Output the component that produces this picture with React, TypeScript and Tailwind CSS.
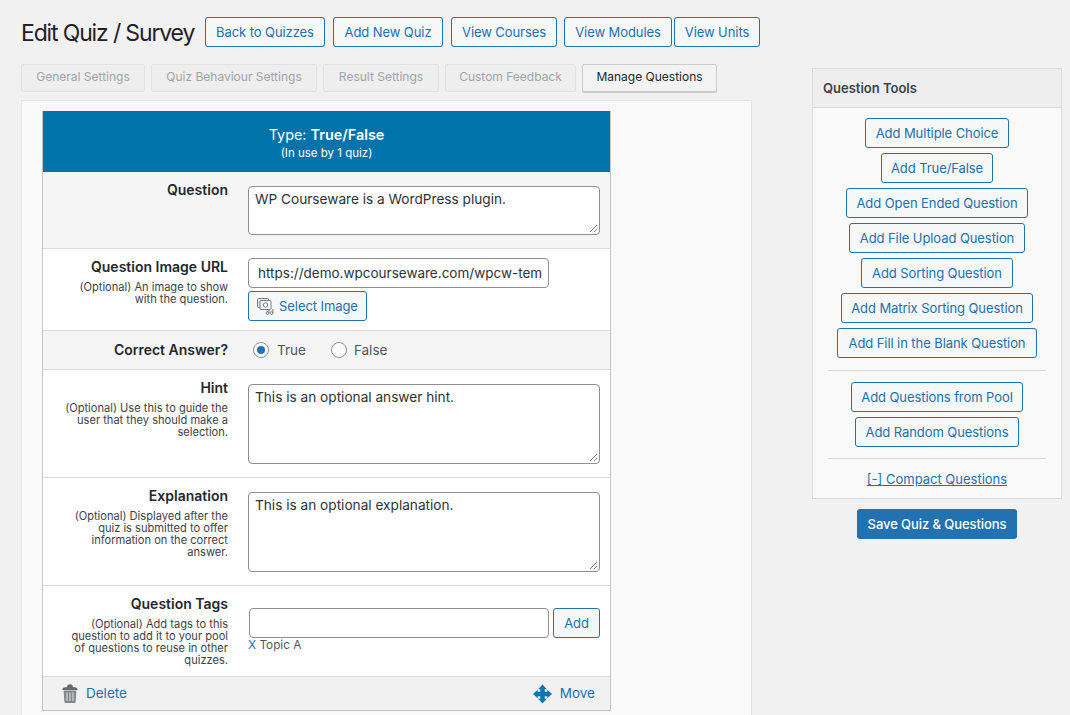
import React from 'react';

const font = "font-['Inter','Liberation_Sans',sans-serif]";

const headerLinks = [
  { label: 'Back to Quizzes', cls: 'w-[120px] mr-2' },
  { label: 'Add New Quiz', cls: 'w-[110px] mr-2' },
  { label: 'View Courses', cls: 'w-[106px] mr-[7px]' },
  { label: 'View Modules', cls: 'w-[108px] mr-[2px]' },
  { label: 'View Units', cls: 'w-[86px]' },
];

const tabs = [
  { label: 'General Settings', cls: 'w-[124px]' },
  { label: 'Quiz Behaviour Settings', cls: 'w-[166px]' },
  { label: 'Result Settings', cls: 'w-[116px]' },
  { label: 'Custom Feedback', cls: 'w-[131px]' },
];

const toolsTop = [
  { label: 'Add Multiple Choice', cls: 'w-[144px]' },
  { label: 'Add True/False', cls: 'w-[112px]' },
  { label: 'Add Open Ended Question', cls: 'w-[182px]' },
  { label: 'Add File Upload Question', cls: 'w-[176px]' },
  { label: 'Add Sorting Question', cls: 'w-[152px]' },
  { label: 'Add Matrix Sorting Question', cls: 'w-[192px]' },
  { label: 'Add Fill in the Blank Question', cls: 'w-[200px]' },
];

const toolsBottom = [
  { label: 'Add Questions from Pool', cls: 'w-[172px]' },
  { label: 'Add Random Questions', cls: 'w-[164px]' },
];

function OutlineButton({ label, className = '' }: { label: string; className?: string }) {
  return (
    <button className={`h-[30px] shrink-0 rounded-[3px] border border-[#2271b1] bg-[#f6f7f7] pt-px text-[13px] tracking-[-0.08px] text-[#2271b1] ${className}`}>
      {label}
    </button>
  );
}

function RowLabel({ title, note }: { title: string; note?: string[] }) {
  return (
    <div className="w-[185px] shrink-0 text-right">
      <div className="text-[14px] font-semibold leading-[18px] text-[#23282d]">{title}</div>
      {note && (
        <div className="mt-[5px] text-[11.1px] leading-[12px] text-[#3c434a]">
          {note.map((line) => (
            <div key={line}>{line}</div>
          ))}
        </div>
      )}
    </div>
  );
}

function Area({ text, height }: { text: string; height: string }) {
  return (
    <div className={`relative w-[352px] ${height} rounded-[4px] border border-[#8c8f94] bg-white px-[6px] py-[2px] text-[13.65px] leading-[20px] text-[#2c3338]`}>
      {text}
      <svg className="absolute bottom-[1px] right-[1px]" width="9" height="9" viewBox="0 0 9 9">
        <path d="M1 8 8 1M5 8l3-3" stroke="#777" strokeWidth="1" fill="none" />
      </svg>
    </div>
  );
}

function ImageIcon() {
  return (
    <svg width="17" height="17" viewBox="0 0 17 17" fill="none" stroke="#777c80" strokeWidth="1">
      <rect x="0.5" y="0.5" width="11" height="9" rx="1" fill="#e4e5e6" />
      <rect x="3" y="2.5" width="11" height="9" rx="1" fill="#f6f7f7" />
      <circle cx="8.5" cy="7" r="2.2" />
      <circle cx="10.5" cy="15" r="1.4" />
      <circle cx="14.5" cy="15" r="1.4" />
      <path d="M11.9 15v-4M15.9 15v-4" />
    </svg>
  );
}

function TrashIcon() {
  return (
    <svg width="16" height="19" viewBox="0 0 16 19">
      <path d="M5 3C5.4 1 6.5 0.3 8 0.3S10.6 1 11 3c2 .1 3.6.5 4.4 1.4L15.6 6H.4l.2-1.6C1.4 3.5 3 3.1 5 3z" fill="#66686a" />
      <path d="M1.6 6.5h12.8l-.8 11.4a1 1 0 0 1-1 1H3.4a1 1 0 0 1-1-1z" fill="#85878a" />
      <path d="M5 8.5v8.5M8 8.5v8.5M11 8.5v8.5" stroke="#d4d5d6" strokeWidth="1.2" />
    </svg>
  );
}

function MoveIcon() {
  return (
    <svg width="19" height="20" viewBox="0 0 20 20" fill="#0f76b5">
      <path d="M10 0l4.6 5H12.4v2.6H15V5.4L20 10l-5 4.6v-2.2h-2.6V15h2.2L10 20l-4.6-5h2.2v-2.6H5v2.2L0 10l5-4.6v2.2h2.6V5H5.4z" />
    </svg>
  );
}

export default function App() {
  return (
    <div className={`flex h-[715px] w-[1070px] overflow-hidden bg-[#f1f1f1] ${font}`}>
      {/* Main column */}
      <div className="ml-[21px] w-[731px] shrink-0 pt-[17px]">
        <div className="flex h-[30px] items-center">
          <h1 className="mr-[10px] h-[30px] w-[174px] shrink-0 whitespace-nowrap pt-px text-[23px] leading-[30px] tracking-[-1.15px] text-[#1d2327]">
            Edit Quiz / Survey
          </h1>
          {headerLinks.map((l) => (
            <OutlineButton key={l.label} label={l.label} className={l.cls} />
          ))}
        </div>

        <div className="mt-[17px] flex gap-[6px]">
          {tabs.map((t) => (
            <div
              key={t.label}
              className={`flex h-[28px] items-center justify-center rounded-[2px] border border-[#e2e2e2] bg-[#eeeeee] pb-[2px] text-[12px] text-[#a0a5aa] ${t.cls}`}
            >
              {t.label}
            </div>
          ))}
          <div className="flex h-[28px] w-[135px] items-center justify-center rounded-[2px] border border-[#cccccc] bg-[#f3f3f3] pb-[2px] text-[12px] text-[#23282d] shadow-[0_1px_0_#cccccc]">
            Manage Questions
          </div>
        </div>

        <div className="mt-[8px] h-[640px] border border-[#e5e5e5] bg-[#f9f9f9] pl-[20px] pt-[10px]">
          <div className="w-[569px] border border-[#c3c4c7] bg-white">
            <div className="-mt-px flex h-[61px] flex-col items-center justify-center bg-[#0073aa] pt-[3px] text-white">
              <div className="text-[14.4px] leading-[20px]">
                Type: <span className="font-semibold">True/False</span>
              </div>
              <div className="text-[11.5px] leading-[16px]">(In use by 1 quiz)</div>
            </div>

            <div className="flex h-[77px] gap-[20px] border-b border-[#dcdcde] bg-[#f5f5f5] pt-[9px]">
              <RowLabel title="Question" />
              <div className="pt-[5px]">
                <Area text="WP Courseware is a WordPress plugin." height="h-[49px]" />
              </div>
            </div>

            <div className="flex h-[82px] gap-[20px] border-b border-[#dcdcde] pt-[9px]">
              <RowLabel title="Question Image URL" note={['(Optional) An image to show', 'with the question.']} />
              <div>
                <div className="h-[30px] w-[301px] overflow-hidden whitespace-nowrap rounded-[4px] border border-[#8c8f94] bg-white px-[9px] text-[13.5px] leading-[28px] text-[#2c3338]">
                  https://demo.wpcourseware.com/wpcw-tem
                </div>
                <button className="mt-[3px] flex h-[30px] w-[119px] items-center justify-center gap-[5px] rounded-[3px] border border-[#2271b1] bg-[#f6f7f7] text-[13px] tracking-[-0.08px] text-[#2271b1]">
                  <ImageIcon />
                  <span className="pt-px">Select Image</span>
                </button>
              </div>
            </div>

            <div className="flex h-[39px] items-center gap-[20px] border-b border-[#dcdcde] bg-[#f5f5f5]">
              <RowLabel title="Correct Answer?" />
              <div className="flex items-center pl-[5px] text-[13.5px] text-[#50575e]">
                <span className="flex h-[16px] w-[16px] items-center justify-center rounded-full border border-[#8c8f94] bg-white">
                  <span className="h-[8px] w-[8px] rounded-full bg-[#2271b1]" />
                </span>
                <span className="ml-[8px]">True</span>
                <span className="ml-[25px] h-[16px] w-[16px] rounded-full border border-[#8c8f94] bg-white" />
                <span className="ml-[7px]">False</span>
              </div>
            </div>

            <div className="flex h-[108px] gap-[20px] border-b border-[#dcdcde] pt-[9px]">
              <RowLabel
                title="Hint"
                note={['(Optional) Use this to guide the', 'user that they should make a', 'selection.']}
              />
              <div className="pt-[5px]">
                <Area text="This is an optional answer hint." height="h-[80px]" />
              </div>
            </div>

            <div className="flex h-[108px] gap-[20px] border-b border-[#dcdcde] pt-[9px]">
              <RowLabel
                title="Explanation"
                note={['(Optional) Displayed after the', 'quiz is submitted to offer', 'information on the correct', 'answer.']}
              />
              <div className="pt-[5px]">
                <Area text="This is an optional explanation." height="h-[80px]" />
              </div>
            </div>

            <div className="flex h-[91px] gap-[21px] border-b border-[#dcdcde] pt-[9px]">
              <RowLabel
                title="Question Tags"
                note={['(Optional) Add tags to this', 'question to add it to your pool', 'of questions to reuse in other', 'quizzes.']}
              />
              <div className="pt-[13px]">
                <div className="flex gap-[4px]">
                  <div className="h-[30px] w-[300px] rounded-[4px] border border-[#8c8f94] bg-white" />
                  <OutlineButton label="Add" className="w-[47px]" />
                </div>
                <div className="-ml-px -mt-px text-[11.8px] leading-[16px] text-[#50575e]">
                  <span className="text-[#2271b1]">X</span> Topic A
                </div>
              </div>
            </div>

            <div className="flex h-[33px] items-center justify-between bg-[#f1f1f1] pl-[19px] pr-[15px] text-[13.5px] text-[#2271b1]">
              <div className="flex items-center gap-[8px]">
                <TrashIcon />
                <span>Delete</span>
              </div>
              <div className="flex items-center gap-[8px]">
                <MoveIcon />
                <span>Move</span>
              </div>
            </div>
          </div>
        </div>
      </div>

      {/* Side column */}
      <div className="ml-[60px] w-[250px] shrink-0 pt-[68px]">
        <div className="border border-[#dcdcde] bg-[#f9f9f9]">
          <div className="flex h-[39px] items-center border-b border-[#dcdcde] bg-[#eeeeee] pl-[10px] pt-px text-[13px] font-semibold text-[#3c434a]">
            Question Tools
          </div>
          <div className="flex flex-col items-center gap-[5px] pt-[10px]">
            {toolsTop.map((b) => (
              <OutlineButton key={b.label} label={b.label} className={b.cls} />
            ))}
          </div>
          <div className="mx-[15px] mb-[11px] mt-[12px] border-t border-[#dcdcde]" />
          <div className="flex flex-col items-center gap-[5px]">
            {toolsBottom.map((b) => (
              <OutlineButton key={b.label} label={b.label} className={b.cls} />
            ))}
          </div>
          <div className="mx-[15px] mt-[11px] border-t border-[#dcdcde]" />
          <div className="flex h-[39px] items-center justify-center pt-[3px] text-[13px] text-[#2271b1] underline">
            [-] Compact Questions
          </div>
        </div>
        <div className="mt-[10px] flex justify-center">
          <button className="h-[30px] w-[160px] rounded-[3px] bg-[#2271b1] pt-px text-[13px] font-medium tracking-[-0.08px] text-white">
            Save Quiz &amp; Questions
          </button>
        </div>
      </div>
    </div>
  );
}
